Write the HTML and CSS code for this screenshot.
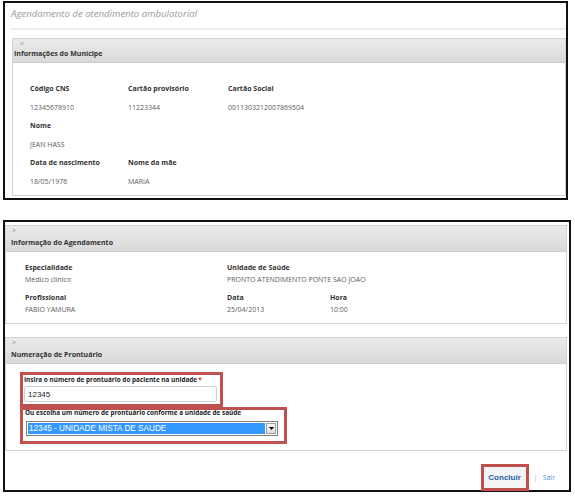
FILE: index.html
```html
<!DOCTYPE html>
<html lang="pt-BR">
<head>
<meta charset="utf-8">
<title>Agendamento de atendimento ambulatorial</title>
<link rel="stylesheet" href="styles.css">
</head>
<body>
<div class="frame frame-top">
  <h1 class="page-title">Agendamento de atendimento ambulatorial</h1>
  <div class="rule"></div>
  <section class="panel panel-munic">
    <header class="panel-head panel-head--compact">
      <div class="chev">&gt;</div>
      <div class="panel-title">Informações do Munícipe</div>
    </header>
    <div class="panel-body munic-body">
      <div class="grid-munic">
        <div class="field"><div class="lbl">Código CNS</div><div class="val">12345678910</div></div>
        <div class="field"><div class="lbl">Cartão provisório</div><div class="val">11223344</div></div>
        <div class="field"><div class="lbl">Cartão Social</div><div class="val">0011303212007869504</div></div>
        <div class="field field-full"><div class="lbl">Nome</div><div class="val">JEAN HASS</div></div>
        <div class="field"><div class="lbl">Data de nascimento</div><div class="val">18/05/1976</div></div>
        <div class="field field-span"><div class="lbl">Nome da mãe</div><div class="val">MARIA</div></div>
      </div>
    </div>
  </section>
</div>

<div class="frame frame-bottom">
  <section class="panel panel-agenda">
    <header class="panel-head">
      <div class="chev">&gt;</div>
      <div class="panel-title">Informação do Agendamento</div>
    </header>
    <div class="panel-body agenda-body">
      <div class="grid-agenda">
        <div class="field tight"><div class="lbl">Especialidade</div><div class="val">Médico clínico</div></div>
        <div class="field tight field-span"><div class="lbl">Unidade de Saúde</div><div class="val">PRONTO ATENDIMENTO PONTE SAO JOAO</div></div>
        <div class="field tight"><div class="lbl">Profissional</div><div class="val">FABIO YAMURA</div></div>
        <div class="field tight"><div class="lbl">Data</div><div class="val">25/04/2013</div></div>
        <div class="field tight"><div class="lbl">Hora</div><div class="val">10:00</div></div>
      </div>
    </div>
  </section>

  <section class="panel panel-pront">
    <header class="panel-head">
      <div class="chev">&gt;</div>
      <div class="panel-title">Numeração de Prontuário</div>
    </header>
    <div class="panel-body pront-body">
      <div class="mark mark-input">
        <div class="form-lbl">Insira o número de prontuário do paciente na unidade<span class="req">*</span></div>
        <input class="text-input" type="text" value="12345">
      </div>
      <div class="mark mark-select">
        <div class="form-lbl form-lbl--up">Ou escolha um número de prontuário conforme a unidade de saúde</div>
        <div class="select">
          <span class="select-text">12345 - UNIDADE MISTA DE SAUDE</span>
          <span class="select-arrow"><svg width="5" height="3" viewBox="0 0 5 3"><path d="M0 0h5L2.5 3z" fill="#000"/></svg></span>
        </div>
      </div>
    </div>
  </section>

  <footer class="actions">
    <div class="mark mark-btn"><button class="btn" type="button">Concluir</button></div>
    <span class="sep">|</span>
    <a class="link" href="#">Sair</a>
  </footer>
</div>
</body>
</html>
```
FILE: styles.css
```css
* { box-sizing: border-box; }

body {
  margin: 0;
  background: #fff;
  font-family: "Open Sans", "DejaVu Sans", sans-serif;
  color: #333;
}

.frame {
  border: 2px solid #111;
  margin-left: 3px;
}

.frame-top {
  margin-top: 1px;
  width: 565px;
  height: 199px;
  padding-left: 6px;
}

.frame-bottom {
  margin-top: 20px;
  width: 568px;
  height: 272px;
  padding-right: 2px;
}

.page-title {
  margin: 4px 0 0 0;
  font-size: 9.6px;
  line-height: 14px;
  font-style: italic;
  font-weight: normal;
  color: #9a9a9a;
}

.rule {
  margin-top: 7px;
  height: 2px;
  background: #ececec;
}

.panel {
  border: 1px solid #d3d3d3;
}

.panel-munic {
  margin-top: 8px;
  margin-left: 1px;
}

.panel-agenda { margin-top: 3px; }
.panel-pront { margin-top: 13px; }

.panel-head {
  background: linear-gradient(#ebebeb, #d9d9d9);
  border-bottom: 1px solid #cbcbcb;
  padding: 0 0 2px 5px;
}

.chev {
  font-size: 7px;
  line-height: 10px;
  color: #8a8a8a;
  padding-left: 1px;
}

.panel-title {
  margin-top: 1px;
  font-size: 7px;
  line-height: 12px;
  font-weight: bold;
  color: #333;
}

.panel-head--compact { padding-left: 1px; }
.panel-head--compact .chev { line-height: 9px; padding-left: 6px; }
.panel-head--compact .panel-title { margin-top: 0; }

.panel-body { background: #fff; }

.munic-body { padding: 20px 0 1px 17px; }
.agenda-body { padding: 10px 0 1px 19px; }
.pront-body { padding: 8px 0 6px 14px; }

.grid-munic {
  display: grid;
  grid-template-columns: 98px 100px auto;
}

.grid-agenda {
  display: grid;
  grid-template-columns: 202px 103px auto;
}

.field-full { grid-column: 1 / -1; }
.field-span { grid-column: 2 / -1; }

.lbl {
  font-size: 7px;
  line-height: 12px;
  font-weight: bold;
  color: #333;
}

.val {
  font-size: 7px;
  line-height: 12px;
  color: #5c5c5c;
  margin-top: 7px;
  margin-bottom: 6px;
}

.tight .val {
  margin-top: 0;
  line-height: 11px;
  margin-bottom: 7px;
}

.mark {
  border: 3px solid #c0504d;
}

.mark-input {
  width: 203px;
  padding: 0 0 2px 1px;
}

.mark-select {
  width: 267px;
  padding: 0 0 5px 3px;
}

.form-lbl {
  font-size: 6.4px;
  line-height: 10px;
  font-weight: bold;
  color: #222;
  white-space: nowrap;
}

.form-lbl--up {
  margin-top: -2px;
  margin-left: -3px;
  padding-left: 2px;
}

.req { color: #e02020; margin-left: 1px; }

.text-input {
  display: block;
  margin: 1px 0 0 0;
  width: 193px;
  height: 16px;
  padding: 0 3px;
  border: 1px solid #cfcfcf;
  border-radius: 2px;
  font-family: "Liberation Sans", Arial, sans-serif;
  font-size: 8px;
  color: #222;
  background: #fff;
}

.select {
  margin-top: 3px;
  width: 252px;
  height: 15px;
  display: flex;
  align-items: stretch;
  border: 1px solid #7f7f7f;
  background: #fff;
  padding: 1px;
}

.select-text {
  flex: 1;
  background: #3399ff;
  color: #fff;
  font-family: "Liberation Sans", Arial, sans-serif;
  font-size: 8.2px;
  line-height: 11px;
  padding-left: 1px;
}

.select-arrow {
  width: 10px;
  margin-left: 1px;
  display: flex;
  align-items: center;
  justify-content: center;
  background: linear-gradient(#f4f4f4, #dcdcdc);
  border: 1px solid #a0a0a0;
}

.actions {
  display: flex;
  justify-content: flex-end;
  align-items: center;
  padding: 13px 12px 0 0;
}

.mark-btn {
  width: 48px;
  height: 27px;
  display: flex;
}

.btn {
  flex: 1;
  margin: 0;
  padding: 0;
  border: 0;
  background: #f4f4f4;
  font-family: "Liberation Sans", Arial, sans-serif;
  font-size: 8px;
  font-weight: bold;
  color: #1f5fa8;
}

.sep {
  margin-left: 6px;
  font-size: 8px;
  color: #b8c4d4;
  font-family: "Liberation Sans", Arial, sans-serif;
}

.link {
  margin-left: 6px;
  font-size: 7px;
  color: #5a92d2;
  text-decoration: none;
}
```
